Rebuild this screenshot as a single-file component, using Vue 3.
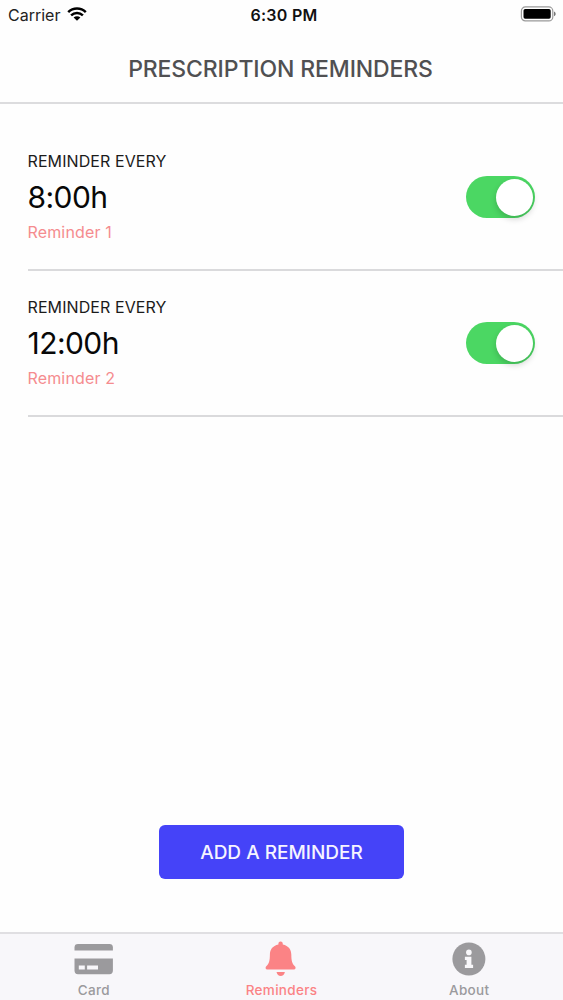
<script setup>
import { ref } from 'vue'

const reminders = ref([
  { time: '8:00h', name: 'Reminder 1', on: true },
  { time: '12:00h', name: 'Reminder 2', on: true },
])
const active = ref('Reminders')
</script>

<template>
  <div class="screen">
    <div class="status">
      <div class="carrier">
        <span>Carrier</span>
        <svg class="wifi" width="20" height="14" viewBox="0 0 20 14">
          <g fill="none" stroke="#000" stroke-width="2.5">
            <path d="M1.2 5.1C6.1.4 13.9.4 18.8 5.1" />
            <path d="M4.1 8.4C7.5 5.2 12.5 5.2 15.9 8.4" />
          </g>
          <path d="M6.6 10.5C8.5 8.8 11.5 8.8 13.4 10.5L10 13.8Z" />
        </svg>
      </div>
      <div class="clock">6:30 PM</div>
      <svg class="battery" width="36" height="16" viewBox="0 0 36 16">
        <rect x="1.4" y=".9" width="31.4" height="14" rx="4" fill="#fff" stroke="#999" stroke-width="1.2" />
        <rect x="3.5" y="3" width="27.2" height="9.8" rx="1.7" />
        <path d="M34 5.6C36.2 6.6 36.2 9.2 34 10.2Z" fill="#777" />
      </svg>
    </div>

    <header class="header"><h1>PRESCRIPTION REMINDERS</h1></header>

    <main class="content">
      <section v-for="item in reminders" :key="item.name" class="row">
        <div class="info">
          <div class="label">REMINDER EVERY</div>
          <div class="time">{{ item.time }}</div>
          <div class="name">{{ item.name }}</div>
        </div>
        <button class="toggle" :class="{ on: item.on }" :aria-label="item.name" @click="item.on = !item.on">
          <i class="knob"></i>
        </button>
      </section>
    </main>

    <div class="action"><button class="add">ADD A REMINDER</button></div>

    <nav class="tabs">
      <div class="tab card" :class="{ active: active === 'Card' }" @click="active = 'Card'">
        <svg width="40" height="38" viewBox="0 0 40 38" fill="currentColor">
          <path d="M.5 10.6V7.4Q.5 4 4 4H35.4Q38.9 4 38.9 7.4V10.6Z" />
          <path fill-rule="evenodd" d="M.5 18.6H38.9V30.6Q38.9 34.2 35.4 34.2H4Q.5 34.2 .5 30.6ZM4.8 25.4V29.6H10.8V25.4ZM13.1 25.4V29.6H24V25.4Z" />
        </svg>
        <span>Card</span>
      </div>
      <div class="tab bell" :class="{ active: active === 'Reminders' }" @click="active = 'Reminders'">
        <svg width="40" height="38" viewBox="0 0 40 38" fill="currentColor">
          <path d="M19.6 1.6C18 1.6 17.3 2.7 17.4 4.5C11.6 5.7 9 9.6 8.9 14.5C8.8 21 8.2 23.4 5.3 26.3C3.9 27.9 4.8 29.6 6.6 29.6H32.6C34.4 29.6 35.3 27.9 33.9 26.3C31 23.4 30.4 21 30.3 14.5C30.2 9.6 27.6 5.7 21.8 4.5C21.9 2.7 21.2 1.6 19.6 1.6Z" />
          <path d="M15.5 32H23.9C23.3 34.6 21.8 35.9 19.7 35.9S16.1 34.6 15.5 32Z" />
        </svg>
        <span>Reminders</span>
      </div>
      <div class="tab about" :class="{ active: active === 'About' }" @click="active = 'About'">
        <svg width="40" height="38" viewBox="0 0 40 38">
          <circle cx="19.9" cy="19" r="16.5" fill="currentColor" />
          <g fill="#f8f7fa">
            <circle cx="19.9" cy="12.4" r="2.8" />
            <path d="M15.9 16.8H22.4V24.7H24.1V28H15.9V24.7H17.6V20.1H15.9Z" />
          </g>
        </svg>
        <span>About</span>
      </div>
    </nav>
  </div>
</template>

<style>
body { background: #fefefe; }
</style>

<style scoped>
.screen {
  width: 563px; height: 1000px; box-sizing: border-box; overflow: hidden;
  display: flex; flex-direction: column; background: #fefefe; color: #111;
  font-family: Inter, "Liberation Sans", sans-serif;
}
button { border: 0; padding: 0; font: inherit; }
.status {
  height: 30px; flex: none; display: grid; grid-template-columns: 1fr auto 1fr;
  align-items: center; padding: 0 7px 0 8px; box-sizing: border-box;
  font-size: 16px; line-height: 29px;
}
.carrier { display: flex; align-items: center; gap: 7px; color: #222; }
.wifi { margin-top: -2px; }
.clock { font-weight: 600; letter-spacing: .25px; padding-left: 4px; }
.battery { justify-self: end; margin-top: -2px; }
.header {
  height: 74px; flex: none; box-sizing: border-box; border-bottom: 2px solid #dcdcde;
  display: flex; justify-content: center; padding: 24px 2px 0 0;
}
h1 { margin: 0; font-size: 23px; line-height: 30px; font-weight: 500; color: #505052; letter-spacing: -.12px; white-space: nowrap; }
.content { flex: 1; padding: 21px 0 0 27.5px; }
.row {
  height: 146px; box-sizing: border-box; border-bottom: 2px solid #dadadc;
  display: flex; justify-content: space-between; padding: 26px 28px 0 0;
}
.label { font-size: 16px; line-height: 20px; color: #1b1b1b; letter-spacing: .09px; }
.time { font-size: 30px; line-height: 36px; margin-top: 8px; color: #080808; letter-spacing: -.55px; }
.name { font-size: 16px; line-height: 20px; margin-top: 7px; color: #f58c8f; letter-spacing: .15px; }
.toggle { width: 69px; height: 42px; margin-top: 25px; padding: 3px; border-radius: 21px; background: #ddd; display: flex; }
.toggle.on { background: #4bd763; justify-content: flex-end; padding-right: 2px; }
.knob { width: 37px; height: 37px; border-radius: 50%; background: #fff; box-shadow: 0 3px 6px rgba(0, 0, 0, .18); }
.action { height: 108px; flex: none; display: flex; justify-content: center; align-items: flex-start; }
.add { width: 245px; height: 54px; margin-top: 1px; border-radius: 6px; background: #4543f8; color: #f6f4ff; font-size: 19px; font-weight: 500; }
.tabs {
  height: 68px; flex: none; box-sizing: border-box; border-top: 2px solid #e0dfe2; background: #f8f7fa;
  display: grid; grid-template-columns: repeat(3, 1fr); color: #9b9a9d;
}
.tab { display: flex; flex-direction: column; align-items: center; padding-top: 6px; font-size: 13.5px; line-height: 18px; font-weight: 500; letter-spacing: .3px; }
.tab span { margin-top: 3px; }
.tab.active { color: #fb8385; }
</style>
